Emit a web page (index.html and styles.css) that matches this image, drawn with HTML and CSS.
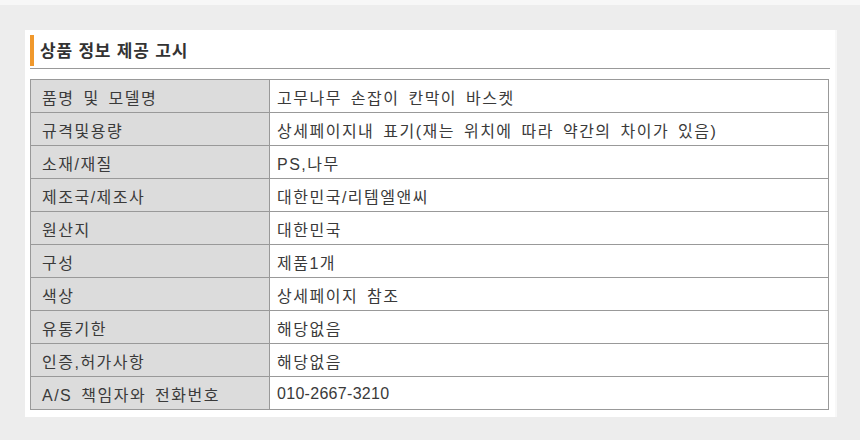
FILE: index.html
```html
<!DOCTYPE html>
<html lang="ko">
<head>
    <meta charset="UTF-8">
    <meta name="viewport" content="width=device-width, initial-scale=1.0">
    <title>상품 정보 제공 고시</title>
    <link rel="stylesheet" href="styles.css">
</head>
<body>
    <div class="notice-panel">
        <h2 class="notice-title">상품 정보 제공 고시</h2>
        <div class="notice-line"></div>
        <table class="notice-table">
            <tr><th>품명 및 모델명</th><td>고무나무 손잡이 칸막이 바스켓</td></tr>
            <tr><th>규격및용량</th><td>상세페이지내 표기(재는 위치에 따라 약간의 차이가 있음)</td></tr>
            <tr><th>소재/재질</th><td>PS,나무</td></tr>
            <tr><th>제조국/제조사</th><td>대한민국/리템엘앤씨</td></tr>
            <tr><th>원산지</th><td>대한민국</td></tr>
            <tr><th>구성</th><td>제품1개</td></tr>
            <tr><th>색상</th><td>상세페이지 참조</td></tr>
            <tr><th>유통기한</th><td>해당없음</td></tr>
            <tr><th>인증,허가사항</th><td>해당없음</td></tr>
            <tr><th>A/S 책임자와 전화번호</th><td class="num">010-2667-3210</td></tr>
        </table>
    </div>
</body>
</html>
```

FILE: styles.css
```css
:root {
    --page-bg: #ededed;
    --line-color: #999;
    --label-bg: #dcdcdc;
    --text-color: #3a3a3a;
    --accent: #f0982c;
    --font-family: "Liberation Sans", "Noto Sans CJK KR", sans-serif;
}

* {
    box-sizing: border-box;
    margin: 0;
    padding: 0;
}

body {
    background: var(--page-bg);
    border-top: 5px solid #f7f7f7;
    padding: 25px 25px 0 25px;
    font-family: var(--font-family);
    color: var(--text-color);
    height: 440px;
    overflow: hidden;
}

.notice-panel {
    width: 810px;
    background: #fff;
    padding: 5px 6px 7px 5px;
    box-shadow: 2px 0 0 #f8f8f8;
}

.notice-title {
    height: 31px;
    border-left: 4px solid var(--accent);
    padding-left: 6px;
    font-size: 17px;
    font-weight: bold;
    line-height: 33px;
    color: #333;
    letter-spacing: 0.8px;
}

.notice-line {
    margin-top: 2px;
    margin-right: -1px;
    height: 1px;
    background: var(--line-color);
}

.notice-table {
    width: 799px;
    margin-top: 10px;
    border-collapse: collapse;
    border: 1px solid var(--line-color);
    font-size: 16px;
    letter-spacing: 1.5px;
    word-spacing: 3px;
}

.notice-table th,
.notice-table td {
    height: 33px;
    border: 1px solid var(--line-color);
    text-align: left;
    font-weight: normal;
    vertical-align: middle;
    padding-top: 1px;
}

.notice-table th {
    width: 239px;
    background: var(--label-bg);
    padding-left: 11px;
}

.notice-table td {
    padding-left: 7px;
}

.notice-table .num {
    letter-spacing: 0.3px;
}
```
